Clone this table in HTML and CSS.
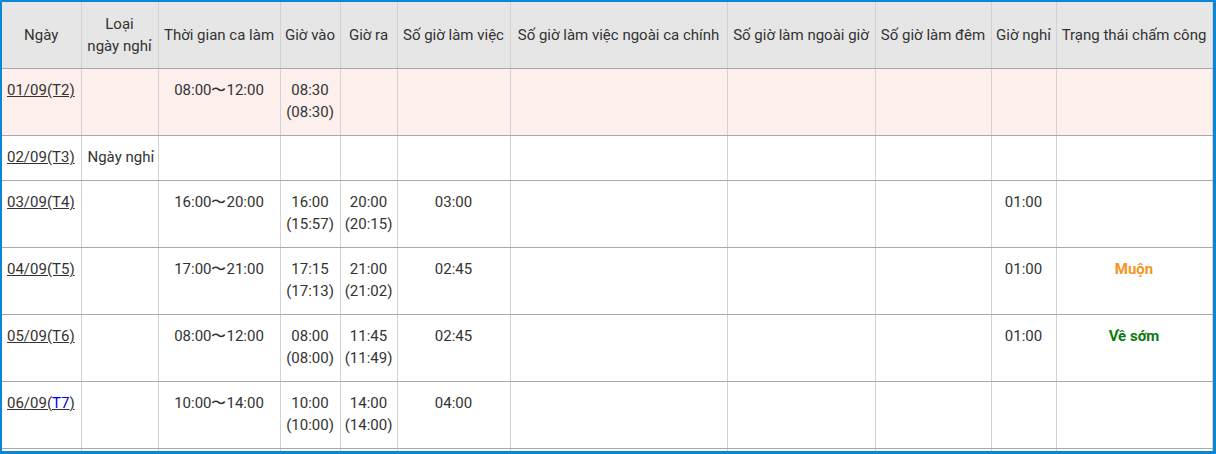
FILE: index.html
```html
<!DOCTYPE html>
<html lang="vi">
<head>
<meta charset="utf-8">
<title>Bảng chấm công</title>
<link rel="stylesheet" href="styles.css">
</head>
<body>
<div class="frame">
<table class="sheet">
<colgroup>
<col class="c1"><col class="c2"><col class="c3"><col class="c4"><col class="c5"><col class="c6"><col class="c7"><col class="c8"><col class="c9"><col class="c10"><col class="c11">
</colgroup>
<thead>
<tr>
<th>Ngày</th>
<th>Loại<br>ngày nghỉ</th>
<th>Thời gian ca làm</th>
<th>Giờ vào</th>
<th>Giờ ra</th>
<th>Số giờ làm việc</th>
<th>Số giờ làm việc ngoài ca chính</th>
<th>Số giờ làm ngoài giờ</th>
<th>Số giờ làm đêm</th>
<th>Giờ nghỉ</th>
<th>Trạng thái chấm công</th>
</tr>
</thead>
<tbody>
<tr class="today">
<td class="date"><a href="#">01/09(T2)</a></td>
<td class="left"></td>
<td>08:00〜12:00</td>
<td>08:30<br>(08:30)</td>
<td></td><td></td><td></td><td></td><td></td><td></td><td></td>
</tr>
<tr>
<td class="date"><a href="#">02/09(T3)</a></td>
<td class="left">Ngày nghỉ</td>
<td></td><td></td><td></td><td></td><td></td><td></td><td></td><td></td><td></td>
</tr>
<tr>
<td class="date"><a href="#">03/09(T4)</a></td>
<td class="left"></td>
<td>16:00〜20:00</td>
<td>16:00<br>(15:57)</td>
<td>20:00<br>(20:15)</td>
<td>03:00</td>
<td></td><td></td><td></td>
<td>01:00</td>
<td></td>
</tr>
<tr>
<td class="date"><a href="#">04/09(T5)</a></td>
<td class="left"></td>
<td>17:00〜21:00</td>
<td>17:15<br>(17:13)</td>
<td>21:00<br>(21:02)</td>
<td>02:45</td>
<td></td><td></td><td></td>
<td>01:00</td>
<td><span class="late">Muộn</span></td>
</tr>
<tr>
<td class="date"><a href="#">05/09(T6)</a></td>
<td class="left"></td>
<td>08:00〜12:00</td>
<td>08:00<br>(08:00)</td>
<td>11:45<br>(11:49)</td>
<td>02:45</td>
<td></td><td></td><td></td>
<td>01:00</td>
<td><span class="early">Về sớm</span></td>
</tr>
<tr>
<td class="date"><a href="#">06/09(<span class="sat">T7</span>)</a></td>
<td class="left"></td>
<td>10:00〜14:00</td>
<td>10:00<br>(10:00)</td>
<td>14:00<br>(14:00)</td>
<td>04:00</td>
<td></td><td></td><td></td>
<td></td>
<td></td>
</tr>
<tr>
<td class="date">&nbsp;</td>
<td></td><td></td><td></td><td></td><td></td><td></td><td></td><td></td><td></td><td></td>
</tr>
</tbody>
</table>
</div>
</body>
</html>
```
FILE: styles.css
```css
html, body {
  margin: 0;
  padding: 0;
  background: #ffffff;
}

.frame {
  width: 1216px;
  height: 454px;
  box-sizing: border-box;
  border-style: solid;
  border-color: #0a86d8;
  border-width: 2px 3px 3px 2px;
  overflow: hidden;
  background: #ffffff;
}

.sheet {
  width: 1210px;
  table-layout: fixed;
  border-collapse: collapse;
  font-family: Roboto, "Liberation Sans", Arial, sans-serif;
  font-size: 15px;
  line-height: 22px;
  color: #333333;
}

.c1 { width: 79px; }
.c2 { width: 77px; }
.c3 { width: 122px; }
.c4 { width: 60px; }
.c5 { width: 57px; }
.c6 { width: 113px; }
.c7 { width: 217px; }
.c8 { width: 148px; }
.c9 { width: 116px; }
.c10 { width: 65px; }
.c11 { width: 156px; }

.sheet th {
  background: #e6e6e6;
  font-weight: normal;
  text-align: center;
  vertical-align: middle;
  padding: 11px 0;
  white-space: nowrap;
  border-left: 1px solid #d2d2d2;
  border-right: 1px solid #d2d2d2;
  border-bottom: 1px solid #a9a9a9;
}

.sheet th:first-child {
  border-left: none;
}

.sheet td {
  text-align: center;
  vertical-align: top;
  padding: 10px 0 12px;
  white-space: nowrap;
  border-left: 1px solid #d2d2d2;
  border-right: 1px solid #d2d2d2;
  border-bottom: 1px solid #a9a9a9;
}

.sheet td:first-child {
  border-left: none;
}

.sheet td.date {
  text-align: left;
  padding-left: 5px;
}

.sheet td.left {
  text-align: left;
  padding-left: 6px;
}

.today td {
  background: #fdefec;
}

.date a {
  color: #333333;
  text-decoration: underline;
}

.date a .sat {
  color: #0000ee;
}

.late {
  color: #f7931e;
  font-weight: bold;
}

.early {
  color: #0d7a0d;
  font-weight: bold;
}
```
